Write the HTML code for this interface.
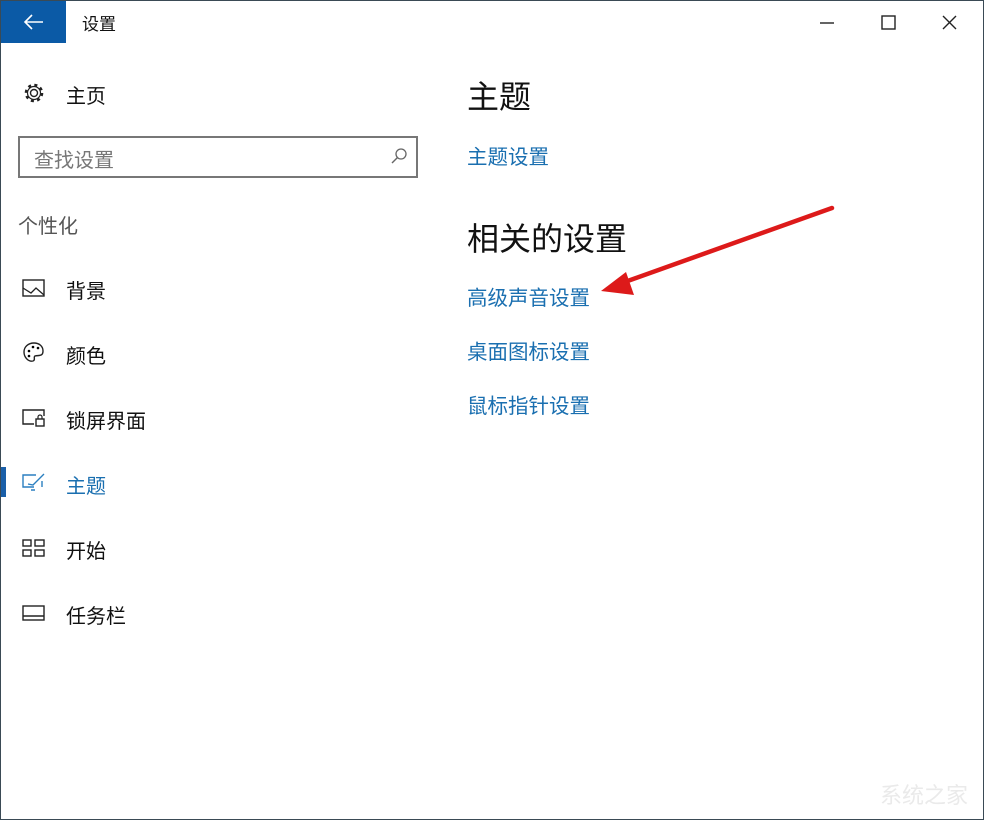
<!DOCTYPE html>
<html><head><meta charset="utf-8"><style>
body{margin:0;width:984px;height:820px;overflow:hidden;background:#fff;font-family:"Liberation Sans","Noto Sans CJK SC",sans-serif;position:relative}
.frame{position:absolute;left:0;top:0;width:982px;height:818px;border:1px solid #3a4a55}
.a{position:absolute;white-space:nowrap}
.nav{font-size:20px;color:#111}
.link{font-size:20.5px;color:#1a6fb0}
.h{font-size:32px;color:#111}
svg{position:absolute}
</style></head><body>
<div class="frame"></div>
<div class="a" style="left:1px;top:1px;width:65px;height:42px;background:#0b5aa6"></div>
<svg style="left:22px;top:12px" width="24" height="20" viewBox="0 0 24 20"><path d="M3 10H21M10 3L3 10L10 17" stroke="#fff" stroke-width="1.6" fill="none"/></svg>
<div class="a" style="left:82px;top:10px;font-size:17px;color:#111">设置</div>
<svg style="left:818px;top:14px" width="150" height="18"><path d="M2 9H16" stroke="#222" stroke-width="1.4"/><rect x="64" y="2" width="13" height="13" stroke="#222" stroke-width="1.4" fill="none"/><path d="M125 2L138 15M138 2L125 15" stroke="#222" stroke-width="1.4"/></svg>

<svg style="left:22px;top:81px" width="24" height="24" viewBox="0 0 24 24"><circle cx="12" cy="12" r="3.5" fill="none" stroke="#222" stroke-width="1.4"/><path d="M10 2h4l.7 2.8 2.4 1.2 2.6-1.3 2.6 2.6-1.3 2.6 1.1 2.4L24 14v-4" fill="none" stroke="none"/><circle cx="12" cy="12" r="8" fill="none" stroke="#222" stroke-width="2.6" stroke-dasharray="3 3.3"/><circle cx="12" cy="12" r="6.5" fill="none" stroke="#222" stroke-width="1.2"/></svg>
<div class="a nav" style="left:66px;top:80px">主页</div>
<div class="a" style="left:18px;top:136px;width:396px;height:38px;border:2px solid #777"></div>
<div class="a" style="left:34px;top:144px;font-size:20px;color:#777">查找设置</div>
<svg style="left:390px;top:147px" width="18" height="18"><circle cx="11" cy="7" r="5" fill="none" stroke="#666" stroke-width="1.3"/><path d="M7.5 10.5L2 16" stroke="#666" stroke-width="1.4"/></svg>
<div class="a" style="left:18px;top:210px;font-size:20px;color:#555">个性化</div>

<svg style="left:22px;top:278px" width="26" height="22"><rect x="1" y="2" width="21" height="16" fill="none" stroke="#222" stroke-width="1.4"/><path d="M1 10L9 15L14 10L22 17" fill="none" stroke="#222" stroke-width="1.3"/></svg>
<div class="a nav" style="left:66px;top:275px">背景</div>
<svg style="left:22px;top:341px" width="24" height="24"><path d="M12 2C6 2 2 6 2 11C2 17 7 21 11 20C14 19 11 16 13 15C16 14 21 16 21 10C21 5 17 2 12 2Z" fill="none" stroke="#222" stroke-width="1.4"/><circle cx="7" cy="10" r="1.3"/><circle cx="11" cy="6" r="1.3"/><circle cx="16" cy="7" r="1.3"/><circle cx="7" cy="15" r="1.3"/></svg>
<div class="a nav" style="left:66px;top:340px">颜色</div>
<svg style="left:22px;top:407px" width="26" height="22"><path d="M12 17H1V3H22V9" fill="none" stroke="#222" stroke-width="1.4"/><rect x="14" y="12" width="8" height="7" fill="none" stroke="#222" stroke-width="1.4"/><path d="M16 12V10a2 2 0 0 1 4 0V12" fill="none" stroke="#222" stroke-width="1.2"/></svg>
<div class="a nav" style="left:66px;top:405px">锁屏界面</div>
<div class="a" style="left:1px;top:467px;width:5px;height:30px;background:#1a5fa8"></div>
<svg style="left:22px;top:472px" width="26" height="22"><path d="M12 15H1V3H14M20 9V15" fill="none" stroke="#2a7fc0" stroke-width="1.4"/><path d="M9 18H13M6 12L11 13L22 2" fill="none" stroke="#2a7fc0" stroke-width="1.4"/></svg>
<div class="a nav" style="left:66px;top:470px;color:#1a6fb0">主题</div>
<svg style="left:22px;top:538px" width="26" height="22"><g fill="none" stroke="#222" stroke-width="1.4"><rect x="1" y="2" width="8" height="6"/><rect x="13" y="2" width="9" height="6"/><rect x="1" y="12" width="8" height="6"/><rect x="13" y="12" width="9" height="6"/></g></svg>
<div class="a nav" style="left:66px;top:535px">开始</div>
<svg style="left:22px;top:603px" width="26" height="22"><rect x="1" y="3" width="21" height="14" fill="none" stroke="#222" stroke-width="1.4"/><path d="M1 13H22" stroke="#222" stroke-width="1.4"/></svg>
<div class="a nav" style="left:66px;top:600px">任务栏</div>

<div class="a h" style="left:467px;top:72px">主题</div>
<div class="a link" style="left:467px;top:140px">主题设置</div>
<div class="a h" style="left:467px;top:214px">相关的设置</div>
<div class="a link" style="left:467px;top:281px">高级声音设置</div>
<div class="a link" style="left:467px;top:335px">桌面图标设置</div>
<div class="a link" style="left:467px;top:389px">鼠标指针设置</div>

<svg style="left:0;top:0" width="984" height="820"><path d="M832 208L622 283" stroke="#dd1a1a" stroke-width="4.5" stroke-linecap="round"/><path d="M601 291L626 272L634 295Z" fill="#dd1a1a"/></svg>
<div class="a" style="left:880px;top:778px;font-size:22px;color:#eaeaea">系统之家</div>
</body></html>
